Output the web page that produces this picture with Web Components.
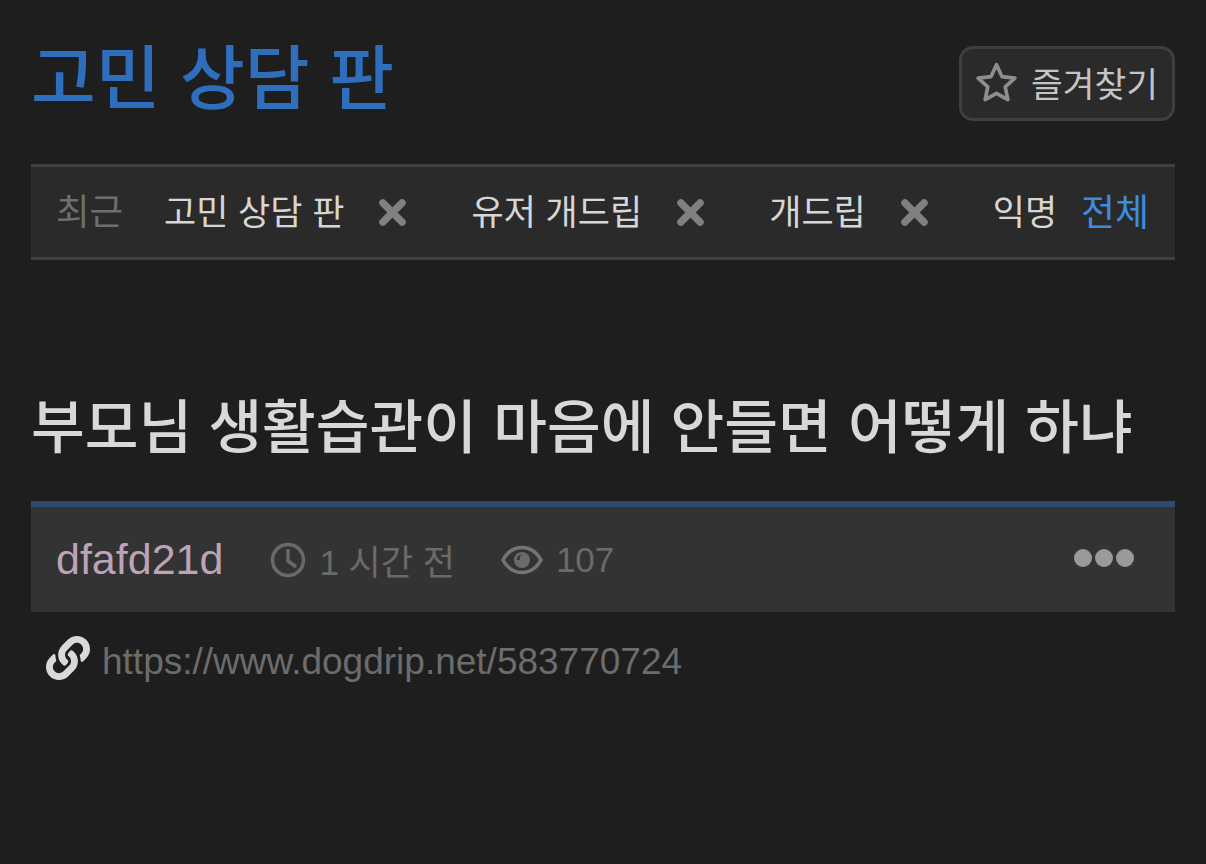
<!DOCTYPE html>
<html lang="ko">
<head>
<meta charset="utf-8">
<title>고민 상담 판</title>
<style>
  html, body { margin: 0; height: 100%; background: #1e1e1e; }
  body { font-family: "Liberation Sans", "Noto Sans CJK KR", sans-serif; overflow: hidden; }
</style>
</head>
<body>
<board-page>
  <board-header title-text="고민 상담 판"></board-header>
  <recent-bar>
    <recent-chip>고민 상담 판</recent-chip>
    <recent-chip>유저 개드립</recent-chip>
    <recent-chip>개드립</recent-chip>
    <recent-chip last>익명</recent-chip>
  </recent-bar>
  <post-view
    post-title="부모님 생활습관이 마음에 안들면 어떻게 하냐"
    author="dfafd21d"
    time="1 시간 전"
    views="107"
    url="https://www.dogdrip.net/583770724"></post-view>
</board-page>

<script>
const FONT = '"Liberation Sans", "Noto Sans CJK KR", sans-serif';

class BoardPage extends HTMLElement {
  constructor() {
    super();
    this.attachShadow({ mode: 'open' }).innerHTML = `
      <style>
        :host { display: block; padding: 0 31px; font-family: ${FONT}; }
      </style>
      <slot></slot>
    `;
  }
}

class BoardHeader extends HTMLElement {
  constructor() {
    super();
    this.attachShadow({ mode: 'open' }).innerHTML = `
      <style>
        :host { display: flex; justify-content: space-between; height: 164px; }
        h1 {
          margin: 30px 0 0 0; font-size: 70.400px; line-height: 100px; font-weight: 500;
          color: #2f6ebd; white-space: nowrap;
        }
        button {
          box-sizing: border-box; margin-top: 46px; width: 216px; height: 75px;
          display: flex; align-items: center; gap: 14px; padding: 0 0 3px 14px;
          background: #2a2a2a; border: 3px solid #3f3f3f; border-radius: 14px;
          color: #c4c4c4; font: 34.500px ${FONT}; white-space: nowrap;
        }
        svg { width: 41px; height: 41px; flex: none; }
      </style>
      <h1>${this.getAttribute('title-text')}</h1>
      <button>
        <svg viewBox="1 1 38 38"><path d="M20 3.500l5 11 12 1.400-8.900 8.100 2.400 11.900L20 30l-10.500 5.900 2.400-11.900L3 15.900l12-1.400z" fill="none" stroke="#8e8e8e" stroke-width="3.400" stroke-linejoin="round"/></svg>
        <span>즐겨찾기</span>
      </button>
    `;
  }
}

class RecentBar extends HTMLElement {
  constructor() {
    super();
    this.attachShadow({ mode: 'open' }).innerHTML = `
      <style>
        :host {
          box-sizing: border-box; display: flex; align-items: center; height: 96px;
          padding: 0 26px 5px 25px; background: #2a2a2a;
          border-top: 3px solid #404040; border-bottom: 3px solid #404040;
          font-size: 35px; white-space: nowrap;
        }
        .label { color: #6e6e6e; width: 108px; flex: none; font-size: 36.500px; }
        .list { flex: 1; display: flex; align-items: center; min-width: 0; overflow: hidden; }
        .all { color: #3d8ce0; flex: none; font-size: 37px; }
      </style>
      <span class="label">최근</span>
      <div class="list"><slot></slot></div>
      <span class="all">전체</span>
    `;
  }
}

class RecentChip extends HTMLElement {
  constructor() {
    super();
    const close = this.hasAttribute('last') ? '' : `
      <svg viewBox="0 0 28 28"><path d="M4 4L24 24M24 4L4 24" stroke="#808080" stroke-width="7.500" stroke-linecap="round"/></svg>`;
    this.attachShadow({ mode: 'open' }).innerHTML = `
      <style>
        :host { display: flex; align-items: center; color: #d6d6d6; flex: none; margin-right: 65px; }
        :host([last]) { margin-right: 0; }
        svg { width: 27px; height: 27px; margin: 5px 0 0 35px; flex: none; }
      </style>
      <span><slot></slot></span>${close}
    `;
  }
}

class PostView extends HTMLElement {
  constructor() {
    super();
    const a = n => this.getAttribute(n);
    this.attachShadow({ mode: 'open' }).innerHTML = `
      <style>
        :host { display: block; }
        h2 {
          margin: 130px 0 0 0; height: 111px; font-size: 58.400px; line-height: 76px; font-weight: 500;
          color: #d8d8d8; white-space: nowrap;
        }
        .meta {
          box-sizing: border-box; height: 111px; display: flex; align-items: center;
          padding: 0 41px 0 25px; background: #333333; border-top: 6px solid #2e4a70;
          font-size: 35px; color: #6a6a6a; white-space: nowrap;
        }
        .author { color: #bba3b8; font-size: 43px; margin-right: 47px; }
        .clock { width: 36px; height: 36px; margin-right: 13px; flex: none; }
        .eye { width: 42px; height: 30px; margin: 0 13px 0 46px; flex: none; }
        .dots { margin: -3px 0 0 auto; display: flex; gap: 3px; }
        .dots i { width: 18px; height: 18px; border-radius: 50%; background: #9a9a9a; }
        .link {
          display: flex; align-items: center; height: 100px; padding-left: 15px;
          font-size: 37px; color: #6c6c6c; white-space: nowrap;
        }
        .link svg { width: 44px; height: 44px; margin: -8px 12px 0 0; flex: none; }
      </style>
      <h2>${a('post-title')}</h2>
      <div class="meta">
        <span class="author">${a('author')}</span>
        <svg class="clock" viewBox="0 0 36 36" fill="none" stroke="#6a6a6a"><circle cx="18" cy="18" r="15.500" stroke-width="3.500"/><path d="M18 8.500V19l7 5" stroke-width="3.500" stroke-linecap="round" stroke-linejoin="round"/></svg>
        <span>${a('time')}</span>
        <svg class="eye" viewBox="0 0 42 30"><path d="M2 15C7 6 13.500 2.500 21 2.500S35 6 40 15C35 24 28.500 27.500 21 27.500S7 24 2 15z" fill="none" stroke="#747474" stroke-width="3.500"/><circle cx="21" cy="15" r="8" fill="#6b6b6b"/><path d="M15.500 15a5.500 5.500 0 0 1 5.500-5.500c-2 1.500-2.500 3.500-2 5.500z" fill="#3a3a3a"/></svg>
        <span>${a('views')}</span>
        <div class="dots"><i></i><i></i><i></i></div>
      </div>
      <div class="link">
        <svg viewBox="0 0 512 512"><path fill="#d9d9d9" d="M326.612 185.391c59.747 59.809 58.927 155.698.36 214.59-.11.12-.24.25-.36.37l-67.2 67.2c-59.27 59.27-155.699 59.262-214.96 0-59.27-59.26-59.27-155.7 0-214.96l37.106-37.106c9.84-9.84 26.786-3.3 27.294 10.606.648 17.722 3.826 35.527 9.69 52.721 1.986 5.822.567 12.262-3.783 16.612l-13.087 13.087c-28.026 28.026-28.905 73.66-1.155 101.96 28.024 28.579 74.086 28.749 102.325.51l67.2-67.19c28.191-28.191 28.073-73.757 0-101.83-3.701-3.694-7.429-6.564-10.341-8.569a16.037 16.037 0 0 1-6.947-12.606c-.396-10.567 3.348-21.456 11.698-29.806l21.054-21.055c5.521-5.521 14.182-6.199 20.584-1.731a152.482 152.482 0 0 1 20.522 17.197zM467.547 44.449c-59.261-59.262-155.69-59.27-214.96 0l-67.2 67.2c-.12.12-.25.25-.36.37-58.566 58.892-59.387 154.781.36 214.59a152.454 152.454 0 0 0 20.521 17.196c6.402 4.468 15.064 3.789 20.584-1.731l21.054-21.055c8.35-8.35 12.094-19.239 11.698-29.806a16.037 16.037 0 0 0-6.947-12.606c-2.912-2.005-6.64-4.875-10.341-8.569-28.073-28.073-28.191-73.639 0-101.83l67.2-67.19c28.239-28.239 74.3-28.069 102.325.51 27.75 28.3 26.872 73.934-1.155 101.96l-13.087 13.087c-4.35 4.35-5.769 10.79-3.783 16.612 5.864 17.194 9.042 34.999 9.69 52.721.509 13.906 17.454 20.446 27.294 10.606l37.106-37.106c59.271-59.259 59.271-155.699.001-214.959z"/></svg>
        <span>${a('url')}</span>
      </div>
    `;
  }
}

customElements.define('board-page', BoardPage);
customElements.define('board-header', BoardHeader);
customElements.define('recent-bar', RecentBar);
customElements.define('recent-chip', RecentChip);
customElements.define('post-view', PostView);
</script>
</body>
</html>
